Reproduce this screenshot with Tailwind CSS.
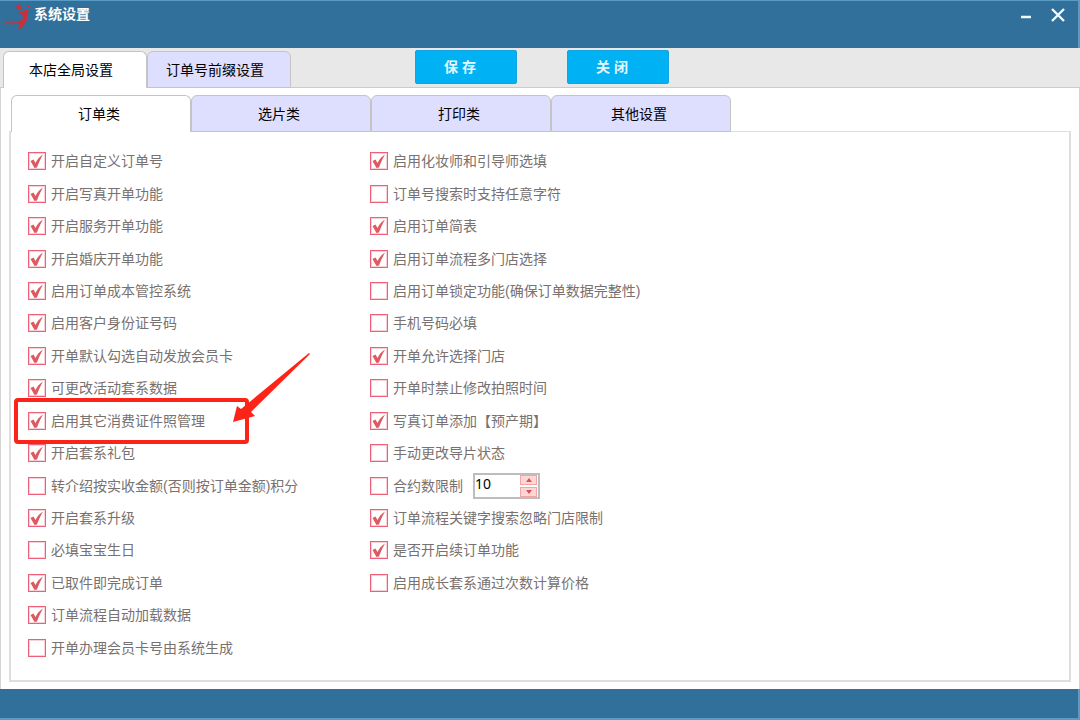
<!DOCTYPE html>
<html lang="zh-CN">
<head>
  <meta charset="UTF-8" />
  <meta name="viewport" content="width=device-width, initial-scale=1" />
  <title>系统设置</title>
  <script src="https://cdn.jsdelivr.net/npm/@tailwindcss/browser@4"></script>
</head>
<body class="min-h-screen flex flex-col bg-white text-sm text-black font-['Liberation_Sans','Noto_Sans_CJK_SC',sans-serif]">

  <!-- Title bar -->
  <header class="h-12 shrink-0 flex items-start justify-between bg-[#30709a] border-t border-r-2 border-[#5a9bc6] pl-1 pr-1">
    <div class="flex items-start">
      <svg class="w-[29px] h-[29px] mt-[2px]" viewBox="0 0 29 29" fill="#c9303c">
        <circle cx="15" cy="4" r="2.6" />
        <circle cx="25" cy="3.5" r="1.2" />
        <path d="M13 8 C16 10 19 9 21 7 L25 6 C23 11 24 15 22 19 C20 23 17 25 15 27 C14 25 14 24 16 22 L13 19 L18 17 C20 14 19 12 13 8 Z" />
        <path d="M1 21 C4 17 5 19 5 21 C7 17 8 19 8 21 C10 18 12 18 12 20 L15 19" fill="none" stroke="#c9303c" stroke-opacity="0.75" stroke-width="1.6" stroke-linecap="round" />
      </svg>
      <h1 class="text-white font-bold leading-5 mt-[3px] ml-px">系统设置</h1>
    </div>
    <div class="flex mt-1 text-[#eefaff]">
      <button type="button" aria-label="最小化" class="w-8 h-5 flex items-center justify-center">
        <svg class="w-4 h-4" viewBox="0 0 16 16" stroke="currentColor" stroke-width="2.5"><path d="M3 10 H13" /></svg>
      </button>
      <button type="button" aria-label="关闭窗口" class="w-8 h-5 flex items-center justify-center">
        <svg class="w-4 h-4" viewBox="0 0 16 16" stroke="currentColor" stroke-width="2.4"><path d="M2 2 L14 14 M14 2 L2 14" /></svg>
      </button>
    </div>
  </header>

  <!-- Main tabs and actions -->
  <div class="h-10 shrink-0 flex items-end bg-[#e8e8e8] border-b border-[#cbcbcb] pl-[3px]">
    <nav class="flex items-end -mb-px">
      <button type="button" class="w-36 h-[37px] rounded-t-md border border-b-0 border-[#c4c4c4] bg-white pr-2">本店全局设置</button>
      <button type="button" class="w-36 h-[37px] rounded-t-md border border-[#c4c4c4] bg-[#dedeff] pr-2">订单号前缀设置</button>
    </nav>
    <div class="flex gap-[50px] ml-[124px] mb-[3px]">
      <button type="button" class="w-[102px] h-[34px] rounded-xs border border-[#12a3e0] bg-[#00b1f4] pr-3 font-bold text-[#e4f8ff]">保 存</button>
      <button type="button" class="w-[102px] h-[34px] rounded-xs border border-[#12a3e0] bg-[#00b1f4] pr-3 font-bold text-[#e4f8ff]">关 闭</button>
    </div>
  </div>

  <main class="flex-1 flex flex-col border-x border-[#d3d3d3] pt-[7px] pb-[7px] pl-2 pr-2">
    <!-- Category tabs -->
    <nav class="flex pl-[2px] -mb-px z-10">
      <button type="button" class="w-[180px] h-[37px] rounded-t-md border border-b-0 border-[#c4c4c4] bg-white pr-1">订单类</button>
      <button type="button" class="w-[180px] h-[37px] rounded-t-md border border-[#c4c4c4] bg-[#dedeff] pr-1">选片类</button>
      <button type="button" class="w-[180px] h-[37px] rounded-t-md border border-[#c4c4c4] bg-[#dedeff] pr-1">打印类</button>
      <button type="button" class="w-[180px] h-[37px] rounded-t-md border border-[#c4c4c4] bg-[#dedeff] pr-1">其他设置</button>
    </nav>

    <form class="flex-1 flex border-2 border-t border-[#dedede] pl-[17px] pt-[13px] pb-4 text-[#78716f]">
      <ul id="leftOptions" class="w-[342px] grid grid-rows-16"></ul>
      <ul id="rightOptions" class="flex-1 grid grid-rows-16"></ul>
    </form>
  </main>

  <footer class="h-[31px] shrink-0 bg-[#30709a] border-b-2 border-r-2 border-[#5a9bc6]"></footer>

  <!-- One option row -->
  <template id="optionRow">
    <li class="relative flex items-center">
      <label class="relative flex items-center gap-[5px] leading-5 whitespace-nowrap">
        <input type="checkbox" class="peer appearance-none w-[18px] h-[18px] shrink-0 border border-[#ee5f78] ring-1 ring-inset ring-[#ee5f78]/30 bg-white" />
        <svg class="absolute left-0 w-[18px] h-5 hidden peer-checked:block pointer-events-none" viewBox="0 0 18 20">
          <path d="M2.5 10 L5.5 8.5 L7.5 12 C9 9 11 6 15 3.5 C12.5 8 10.5 12 9 16.5 L6.5 17 Z" fill="#dc5a60" />
        </svg>
        <span></span>
      </label>
    </li>
  </template>

  <!-- Number field of the contract limit -->
  <template id="limitField">
    <div class="relative ml-[10px]">
      <input type="text" value="10" aria-label="合约数限制数量" class="block w-[67px] h-[26px] border-2 border-[#bdbdbd] bg-white pb-1 text-black font-['Noto_Sans',sans-serif]" />
      <div class="absolute right-[3px] inset-y-[2px] flex flex-col justify-between">
        <button type="button" aria-label="增加" class="w-[17px] h-[10px] flex items-center justify-center border border-[#f3a5a5] bg-[#ffd5d5]">
          <svg class="w-2 h-1" viewBox="0 0 8 4" fill="#d05656"><path d="M1 4 L4 0 L7 4 Z" /></svg>
        </button>
        <button type="button" aria-label="减少" class="w-[17px] h-[10px] flex items-center justify-center border border-[#f3a5a5] bg-[#ffd5d5]">
          <svg class="w-2 h-1" viewBox="0 0 8 4" fill="#d05656"><path d="M1 0 L4 4 L7 0 Z" /></svg>
        </button>
      </div>
    </div>
  </template>

  <!-- Red frame and arrow over the marked row -->
  <template id="marker">
    <div class="absolute -left-[14px] -top-[7px] w-[235px] h-[46px] rounded-sm border-4 border-[#fc2418] pointer-events-none z-10"></div>
    <svg class="absolute left-[204px] -top-[52px] w-20 h-[70px] pointer-events-none z-10" viewBox="0 0 80 70" fill="#fc2418">
      <path d="M1 69 L5 53 L9 56 L77 0 L78 1 L19 59 L23 63 Z" />
    </svg>
  </template>

  <script>
    const left = [
      ['开启自定义订单号', true],
      ['开启写真开单功能', true],
      ['开启服务开单功能', true],
      ['开启婚庆开单功能', true],
      ['启用订单成本管控系统', true],
      ['启用客户身份证号码', true],
      ['开单默认勾选自动发放会员卡', true],
      ['可更改活动套系数据', true],
      ['启用其它消费证件照管理', true, 'marker'],
      ['开启套系礼包', true],
      ['转介绍按实收金额(否则按订单金额)积分', false],
      ['开启套系升级', true],
      ['必填宝宝生日', false],
      ['已取件即完成订单', true],
      ['订单流程自动加载数据', true],
      ['开单办理会员卡号由系统生成', false],
    ];
    const right = [
      ['启用化妆师和引导师选填', true],
      ['订单号搜索时支持任意字符', false],
      ['启用订单简表', true],
      ['启用订单流程多门店选择', true],
      ['启用订单锁定功能(确保订单数据完整性)', false],
      ['手机号码必填', false],
      ['开单允许选择门店', true],
      ['开单时禁止修改拍照时间', false],
      ['写真订单添加【预产期】', true],
      ['手动更改导片状态', false],
      ['合约数限制', false, 'limitField'],
      ['订单流程关键字搜索忽略门店限制', true],
      ['是否开启续订单功能', true],
      ['启用成长套系通过次数计算价格', false],
    ];

    function fill(listId, options) {
      const list = document.getElementById(listId);
      options.forEach(([text, checked, extra]) => {
        const row = document.getElementById('optionRow').content.cloneNode(true);
        row.querySelector('input').checked = checked;
        row.querySelector('span').textContent = text;
        if (extra) {
          row.querySelector('li').appendChild(document.getElementById(extra).content.cloneNode(true));
        }
        list.appendChild(row);
      });
    }

    fill('leftOptions', left);
    fill('rightOptions', right);
  </script>
</body>
</html>
